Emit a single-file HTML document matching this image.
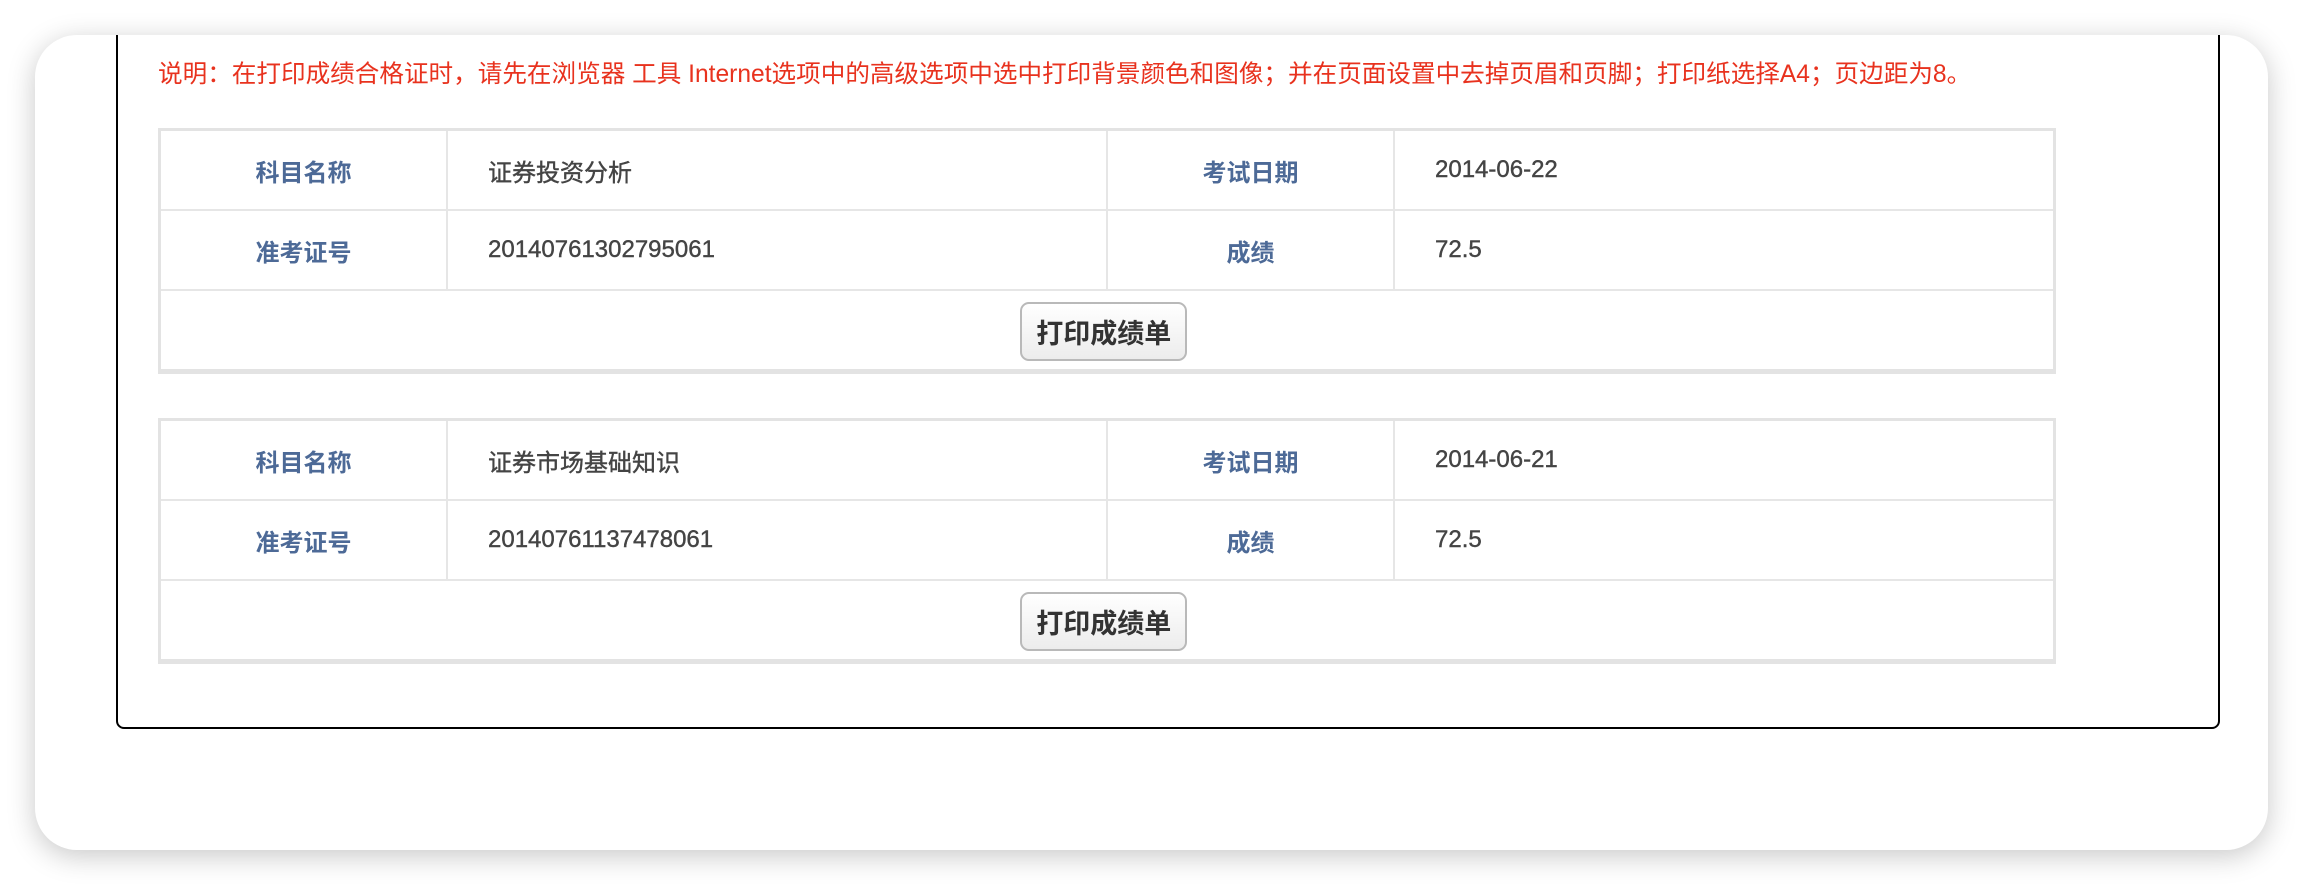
<!DOCTYPE html>
<html><head><meta charset="utf-8"><style>
html,body{margin:0;padding:0;width:2304px;height:886px;overflow:hidden;background:#fff;font-family:"Liberation Sans","Noto Sans CJK SC",sans-serif;}
.card{position:absolute;left:35px;top:35px;width:2233px;height:815px;background:#fff;border-radius:42px;box-shadow:0 6px 28px rgba(0,0,0,.22);}
.box{position:absolute;left:81px;top:-40px;width:2100px;height:730px;border:2px solid #000;border-radius:0 0 8px 8px;}
.note{position:absolute;left:158px;top:59px;font-size:24.6px;color:#e8321e;white-space:nowrap;line-height:32px;}
table{position:absolute;left:158px;border-collapse:collapse;border:3px solid #e3e3e3;border-bottom-width:5px;}
td{border:2px solid #e6e6e6;height:78px;font-size:24px;padding:0;}
td.l{width:285px;text-align:center;color:#4d6a97;font-weight:bold;}
td.v{width:660px;color:#444;padding-left:40px;box-sizing:border-box;-webkit-text-stroke:0.4px #444;}
td.b{text-align:center;height:78px;}
button{width:167px;height:59px;border:2px solid #b9b9b9;border-radius:9px;background:linear-gradient(#fff,#ececec);font-family:"Liberation Sans","Noto Sans CJK SC",sans-serif;font-size:27px;font-weight:bold;color:#333;padding:0;margin-top:2px;margin-left:-6px;}
</style></head><body>
<div class="card"></div>
<div style="position:absolute;left:35px;top:35px;width:2233px;height:815px;border-radius:42px;overflow:hidden;">
<div class="box"></div>
</div>
<div class="note">说明：在打印成绩合格证时，请先在浏览器 工具 Internet选项中的高级选项中选中打印背景颜色和图像；并在页面设置中去掉页眉和页脚；打印纸选择A4；页边距为8。</div>
<table style="top:128px;">
<tr><td class="l">科目名称</td><td class="v">证券投资分析</td><td class="l">考试日期</td><td class="v">2014-06-22</td></tr>
<tr><td class="l">准考证号</td><td class="v">20140761302795061</td><td class="l">成绩</td><td class="v">72.5</td></tr>
<tr><td class="b" colspan="4"><button>打印成绩单</button></td></tr>
</table>
<table style="top:418px;">
<tr><td class="l">科目名称</td><td class="v">证券市场基础知识</td><td class="l">考试日期</td><td class="v">2014-06-21</td></tr>
<tr><td class="l">准考证号</td><td class="v">20140761137478061</td><td class="l">成绩</td><td class="v">72.5</td></tr>
<tr><td class="b" colspan="4"><button>打印成绩单</button></td></tr>
</table>
</body></html>
